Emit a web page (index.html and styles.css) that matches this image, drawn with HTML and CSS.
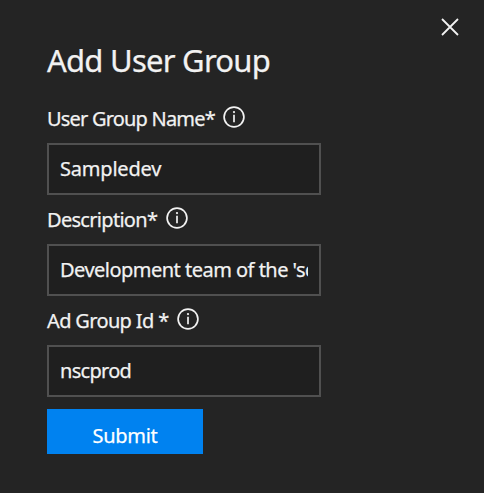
FILE: index.html
```html
<!DOCTYPE html>
<html lang="en">
<head>
<meta charset="utf-8">
<title>Add User Group</title>
<link rel="stylesheet" href="styles.css">
</head>
<body>
<svg class="sprite" width="0" height="0" aria-hidden="true">
  <symbol id="info" viewBox="0 0 22 22">
    <circle cx="11" cy="11" r="9.9" fill="none" stroke="currentColor" stroke-width="1.7"/>
    <path d="M11 8.8v7.5" stroke="currentColor" stroke-width="1.7"/>
    <circle cx="11" cy="6.1" r="1.1" fill="currentColor"/>
  </symbol>
</svg>
<main class="dialog">
  <button class="close" type="button" aria-label="Close">
    <svg width="18" height="18" viewBox="0 0 18 18"><path d="M1 1l16 16M17 1L1 17" stroke="currentColor" stroke-width="1.8"/></svg>
  </button>
  <h1 class="title">Add User Group</h1>
  <form class="form">
    <div class="field">
      <label class="label" for="name"><span class="label-name">User Group Name*</span><svg class="info"><use href="#info"/></svg></label>
      <input class="input input-name" id="name" type="text" value="Sampledev">
    </div>
    <div class="field">
      <label class="label" for="desc"><span class="label-desc">Description*</span><svg class="info"><use href="#info"/></svg></label>
      <input class="input input-desc" id="desc" type="text" value="Development team of the 'scprod'">
    </div>
    <div class="field">
      <label class="label" for="group"><span class="label-group">Ad Group Id *</span><svg class="info"><use href="#info"/></svg></label>
      <input class="input input-group" id="group" type="text" value="nscprod">
    </div>
    <button class="submit" type="button">Submit</button>
  </form>
</main>
</body>
</html>
```
FILE: styles.css
```css
* { box-sizing: border-box; }
body {
  margin: 0;
  background: #242424;
  color: #f2f2f2;
  font-family: "Noto Sans", sans-serif;
  font-size: 20px;
  -webkit-text-stroke: 0.25px currentColor;
}
.sprite { position: absolute; }
.dialog {
  position: relative;
  height: 493px;
  padding: 38px 0 0 47px;
  overflow: hidden;
}
.close {
  position: absolute;
  top: 18px;
  right: 25px;
  width: 18px;
  height: 18px;
  padding: 0;
  border: 0;
  background: none;
  color: #f2f2f2;
}
.close svg { display: block; }
.title {
  margin: 0;
  height: 56px;
  font-size: 31px;
  font-weight: 400;
  line-height: 44px;
  letter-spacing: -0.75px;
  white-space: nowrap;
}
.form { width: 274px; }
.field { height: 101px; }
.label {
  display: flex;
  align-items: center;
  gap: 8.5px;
  height: 49px;
  line-height: 49px;
  white-space: nowrap;
}
.label-name { letter-spacing: -0.8px; }
.label-desc { letter-spacing: -0.7px; }
.label-group { letter-spacing: -0.65px; }
.info { width: 22px; height: 22px; margin-top: -3px; }
.input {
  display: block;
  width: 274px;
  height: 52px;
  padding: 0 11px 2px;
  border: 2px solid #505050;
  border-radius: 0;
  outline: 0;
  background: #1f1f1f;
  color: #f2f2f2;
  font: inherit;
}
.input-name { letter-spacing: -0.2px; }
.input-desc { letter-spacing: -0.52px; }
.input-group { letter-spacing: -0.7px; }
.submit {
  display: block;
  width: 156px;
  height: 45px;
  margin-top: 12px;
  padding: 8px 0 0;
  border: 0;
  background: #0082f0;
  color: #fff;
  font: inherit;
  letter-spacing: -0.3px;
}
```
